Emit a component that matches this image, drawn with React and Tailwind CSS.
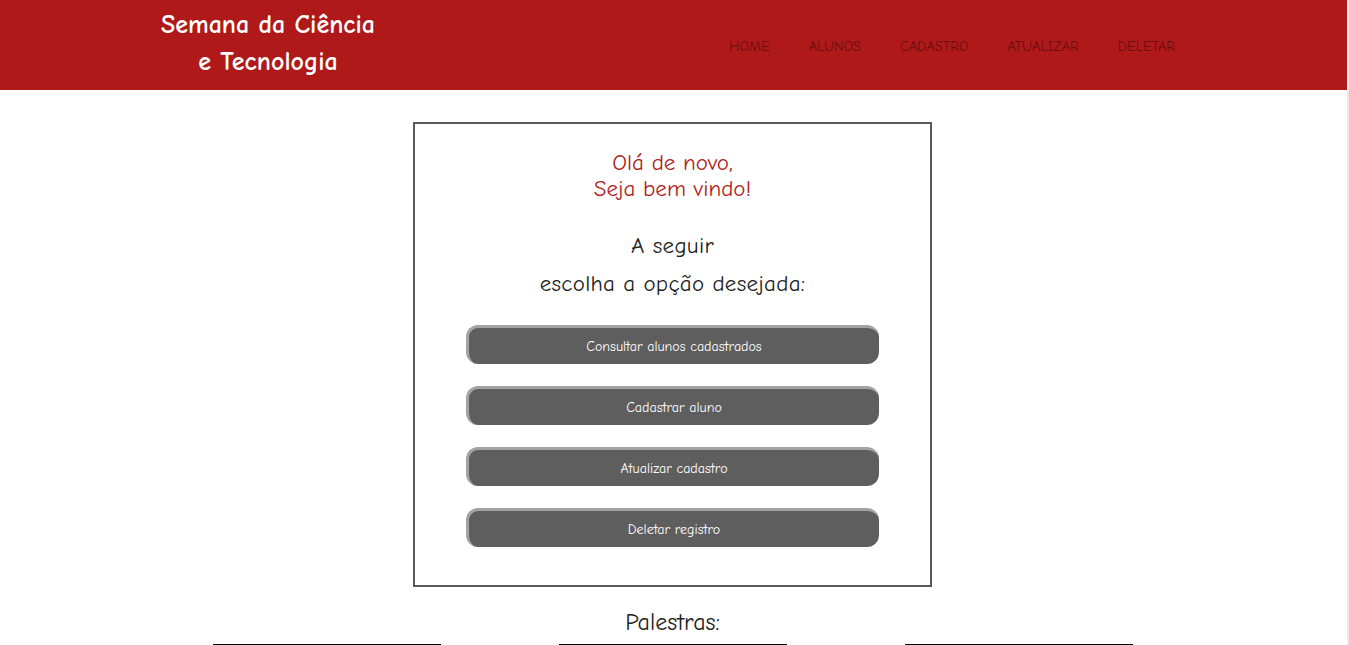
const links = ["HOME", "ALUNOS", "CADASTRO", "ATUALIZAR", "DELETAR"];
const options = [
  "Consultar alunos cadastrados",
  "Cadastrar aluno",
  "Atualizar cadastro",
  "Deletar registro",
];

const font = { fontFamily: '"Comic Sans MS", "Comic Neue", "DejaVu Sans", sans-serif' };

export default function App() {
  return (
    <div style={font} className="h-[645px] overflow-hidden bg-white text-[#222] flex">
      <div className="w-[1347px] shrink-0">
        <header className="h-[90px] bg-[#b01919] flex items-center">
          <h1 className="w-[280px] ml-[128px] -mt-[2px] text-center text-white font-bold text-[26px] leading-[37px]">
            Semana da Ciência
            <br />e Tecnologia
          </h1>
          <nav className="ml-auto mr-[172px] mt-[4px] flex gap-[39px]">
            {links.map((l) => (
              <a key={l} href="#" className="text-[14.5px] text-[#6a0f0f]">
                {l}
              </a>
            ))}
          </nav>
        </header>

        <main className="flex flex-col items-center pr-[2px]">
          <section className="mt-[32px] w-[519px] h-[465px] border-2 border-[#5a5a5a] flex flex-col items-center pt-[26px]">
            <p className="text-center text-[#b01c1c] text-[23px] leading-[26px]">
              Olá de novo,
              <br />
              Seja bem vindo!
            </p>
            <p className="mt-[25px] text-center text-[23px] tracking-[0.3px] leading-[38px]">
              A seguir
              <br />
              escolha a opção desejada:
            </p>
            <div className="mt-[22px] flex flex-col gap-[22px]">
              {options.map((o) => (
                <button
                  key={o}
                  className="w-[413px] h-[39px] rounded-[12px] bg-[#5e5e5e] text-white text-[14px] border-t-[3px] border-l-[3px] border-[#a3a3a3] flex items-center justify-center"
                >
                  {o}
                </button>
              ))}
            </div>
          </section>

          <h2 className="mt-[20px] text-[24px] leading-[30px]">Palestras:</h2>

          <div className="mt-[7px] w-full flex justify-center gap-[118px]">
            {[0, 1, 2].map((i) => (
              <div key={i} className="w-[228px] h-[40px] border-t border-black" />
            ))}
          </div>
        </main>
      </div>
      <div className="w-[2px] bg-[#ebebeb]" />
    </div>
  );
}
